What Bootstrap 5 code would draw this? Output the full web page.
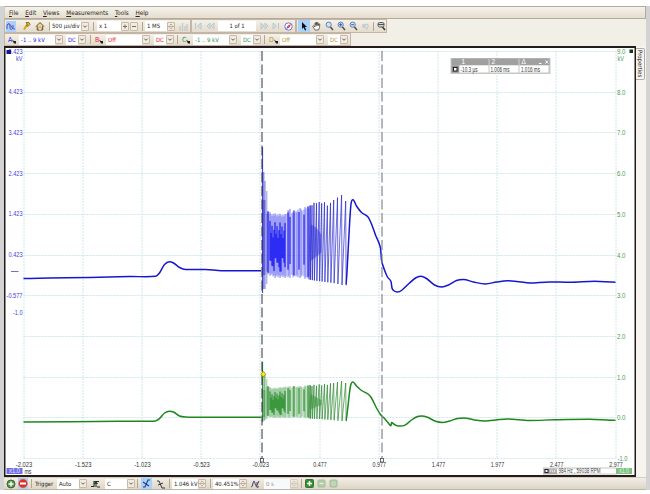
<!DOCTYPE html>
<html lang="en">
<head>
<meta charset="utf-8">
<title>Oscilloscope capture</title>
<link href="https://cdn.jsdelivr.net/npm/bootstrap@5.3.0/dist/css/bootstrap.min.css" rel="stylesheet">
<script src="https://cdn.jsdelivr.net/npm/bootstrap@5.3.0/dist/js/bootstrap.bundle.min.js"></script>
<style>
body{font:5.9px/8px "DejaVu Sans Condensed","DejaVu Sans",sans-serif;color:#262420;background:#fff;width:650px;height:494px}
.frame{height:484px;margin-top:6px;background:#d3d3d3;padding:0 4px 0 4px}
.app{background:#f2efe7;height:484px}
.menus{height:13px;background:linear-gradient(#f4f2ea,#e5decf);border:1px solid #b1aba0;border-left-color:#ccc;gap:6.8px;padding-left:4px;font-size:6.3px}
.strip{height:14px}
.strip.inputs{height:13px}
.panel{background:linear-gradient(#f4f1e8,#e3dccd);border:1px solid #c5b5a6;height:100%;padding-left:1px}
.sepr{width:1px;height:9px;background:#b8a493;flex:none}
.fld{height:10px;background:#fff;line-height:10px;padding-left:2px;flex:none;white-space:nowrap}
.drop,.spin{width:8px;height:9px;border:1px solid #c9b9a8;border-radius:1px;background:#f2ece0;flex:none;display:block}
.panel svg,.foot svg{display:block;flex:none;overflow:visible}
.on{background:#a9d2fa}
.g1{margin-left:1px}.g2{margin-left:2px}.g3{margin-left:3px}.g4{margin-left:4px}.g5{margin-left:5px}.g6{margin-left:6px}
.w12{width:12px}.w21{width:22px}.w24{width:24px}.w26{width:26px}.w30{width:31px}.w36{width:36px}.w38{width:38px}
.chA{color:#2424e4}.chB{color:#f02020}.chC{color:#2f9150}.chD{color:#b99030}
.chan{width:11px;flex:none;font-size:7px}
.p1{width:187px}.p2{width:105px}.p3{width:91px}.p4{width:347px}
.plot{width:632px;height:431px;display:block;flex:none}
.side{width:10px;background:#f7f4ef}
.tab{writing-mode:vertical-rl;height:32px;width:9px;border:1px solid #b3aea5;border-left:0;border-radius:0 2px 2px 0;line-height:8px;margin-top:2px;font-size:6px;padding-top:1px;white-space:nowrap}
.foot{height:13px;background:linear-gradient(#f1eee4,#ddd6c6);border-bottom:1px solid #bdb6a8;border-top:1px solid #d9cdbd}
.plot text{font-family:"Liberation Sans",Arial,sans-serif;font-size:6.5px}
</style>
</head>
<body class="overflow-hidden">
<svg width="0" height="0" class="position-absolute">
<defs>
<symbol id="dn" viewBox="0 0 6 7"><path d="M1.3 2.6 3 4.3 4.7 2.6" fill="none" stroke="#625c50"/></symbol>
<symbol id="sp" viewBox="0 0 6 7"><path d="M1.5 2.4 3 1l1.5 1.4M1.5 4.8 3 6.2l1.5-1.4M0 3.6h6" fill="none" stroke="#9a8a78" stroke-width=".7"/></symbol>
<symbol id="pls" viewBox="0 0 6 7"><path d="M1 3.5h4M3 1.5v4" stroke="#777066"/></symbol>
<symbol id="mns" viewBox="0 0 6 7"><path d="M1 3.5h4" stroke="#777066"/></symbol>
<symbol id="lens" viewBox="0 0 9 10"><path d="M5 5.5 8 9" stroke="#5a4c40" stroke-width="1.5"/><circle cx="3.7" cy="3.7" r="2.6" fill="#c9e4f8" stroke="#6680b4"/></symbol>
<symbol id="probe" viewBox="0 0 5 5"><path d="M0 .5 2 2l2 0v2.500H2z" fill="#222"/></symbol>
</defs>
</svg>
<div class="frame">
<div class="app d-flex flex-column">
  <nav class="menus d-flex align-items-center"><span><u>F</u>ile</span><span><u>E</u>dit</span><span><u>V</u>iews</span><span><u>M</u>easurements</span><span><u>T</u>ools</span><span><u>H</u>elp</span></nav>
  <div class="strip d-flex">
    <div class="panel p1 d-flex align-items-center">
      <svg class="on" width="10" height="11" viewBox="0 0 10 11"><path d="M1 8V5c0-3 3-3 3 0v2c0 2 3 2 3-1V4" fill="none" stroke="#3454cc"/><path d="M1 4c2-2 3-1 4 1s2 3 4 3" fill="none" stroke="#9a3a94"/></svg>
      <svg class="g6" width="9" height="10" viewBox="0 0 9 10"><path d="M2 8.500 5.500 3" stroke="#d7a113" stroke-width="2"/><path d="M4 1.500h3l1 2-2 2-1.500-1 1-1z" fill="#eab720" stroke="#4a3a18" stroke-width=".6"/></svg>
      <svg class="g4" width="10" height="10" viewBox="0 0 10 10"><path d="M1 5.500 5 1.500l4 4M2.200 5v4h5.500V5" fill="#f3d68c" stroke="#50401f" stroke-width=".9"/><path d="M4 9V6h2v3" fill="#fff" stroke="#795b2d" stroke-width=".5"/></svg>
      <i class="sepr g4"></i><div class="fld w30">500 µs/div</div><span class="drop"><svg width="6" height="7"><use href="#dn"/></svg></span>
      <i class="sepr g4"></i><div class="fld w24 g3">x 1</div><span class="drop"><svg width="6" height="7"><use href="#pls"/></svg></span><span class="drop g1"><svg width="6" height="7"><use href="#mns"/></svg></span>
      <i class="sepr g4"></i><div class="fld w21 g2">1 MS</div><span class="spin"><svg width="6" height="7"><use href="#sp"/></svg></span>
      <svg class="g4" width="9" height="9" viewBox="0 0 9 9"><path d="M1 9V4M3.500 9V1M6 9V4M8 9V2" stroke="#c4cac9" stroke-width="1.3"/></svg>
    </div>
    <div class="panel p2 d-flex align-items-center">
      <svg class="g1" width="8" height="8" viewBox="0 0 8 8"><path d="M1.500 1v6M7 1 3.500 4 7 7z" fill="#d7e1df" stroke="#b6c8cb"/></svg>
      <svg class="g4" width="9" height="8" viewBox="0 0 9 8"><path d="M4 1 1 4l3 3zM8 1 5 4l3 3z" fill="#d7e1df" stroke="#b6c8cb"/></svg>
      <div class="fld w38 g3 text-center p-0">1 of 1</div>
      <svg class="g4" width="9" height="8" viewBox="0 0 9 8"><path d="M1 1 4 4 1 7zM5 1l3 3-3 3z" fill="#d7e1df" stroke="#b6c8cb"/></svg>
      <svg class="g3" width="8" height="8" viewBox="0 0 8 8"><path d="M6.500 1v6M1 1l3.500 3L1 7z" fill="#d7e1df" stroke="#b6c8cb"/></svg>
      <svg class="g4" width="9" height="9" viewBox="0 0 9 9"><circle cx="4.500" cy="4.500" r="3.700" fill="#fff" stroke="#8a6cc4"/><path d="M7 2 5.500 5.500 3.700 3.700z" fill="#e0302a"/><path d="M2 7 5.500 5.500 3.700 3.700z" fill="#4660cc"/></svg>
    </div>
    <div class="panel p3 d-flex align-items-center">
      <svg class="on" width="12" height="12" viewBox="0 0 12 12"><path d="M4 2v7l1.600-1.500L7 10.500l1.200-.6L6.900 7H9z" fill="#111"/></svg>
      <svg class="g2" width="9" height="10" viewBox="0 0 9 10"><path d="M3 9 .7 5.300l1-.6L3 6V2h1v2.500-3h1v3l.2-2.700h1v3L6.800 3h1L7.500 6.500 6.500 9z" fill="#fff" stroke="#37332e" stroke-width=".7"/></svg>
      <svg class="g4" width="9" height="10"><use href="#lens"/></svg>
      <svg class="g3" width="9" height="10"><use href="#lens"/><path d="M2.200 3.700h3M3.700 2.200v3" stroke="#2838a8" stroke-width=".8"/></svg>
      <svg class="g3" width="9" height="10"><use href="#lens"/><path d="M2.200 3.700h3" stroke="#2838a8" stroke-width=".8"/></svg>
      <svg class="g3" width="9" height="9" viewBox="0 0 9 9"><path d="M2 2v3h3M2.500 4.500C4 1 8 2 7 5L5 8" fill="none" stroke="#bfcacc" stroke-width="1.300"/></svg>
      <i class="sepr g3"></i>
      <svg class="g3" width="9" height="10" viewBox="0 0 9 10"><path d="M5 5.500 8 9" stroke="#463c34" stroke-width="1.600"/><rect x="1" y="1.500" width="6" height="4.500" rx="1.500" fill="#c8d3d7" stroke="#615950"/><path d="M1 3.500h6" stroke="#555"/></svg>
    </div>
  </div>
  <div class="strip inputs d-flex">
    <div class="panel p4 d-flex align-items-center">
      <div class="chan g2 chA d-flex align-items-center">A<svg width="5" height="5" class="mt-1"><use href="#probe"/></svg></div><div class="fld w36 chA">-1 .. 9 kV</div><span class="drop"><svg width="6" height="7"><use href="#dn"/></svg></span><div class="fld w12 g3 chA">DC</div><span class="drop"><svg width="6" height="7"><use href="#dn"/></svg></span>
      <i class="sepr g4"></i>
      <div class="chan g4 chB d-flex align-items-center">B<svg width="5" height="5" class="mt-1"><use href="#probe"/></svg></div><div class="fld w36 chB">Off</div><span class="drop"><svg width="6" height="7"><use href="#dn"/></svg></span><div class="fld w12 g4 chB">DC</div><span class="drop"><svg width="6" height="7"><use href="#dn"/></svg></span>
      <i class="sepr g3"></i>
      <div class="chan g4 chC d-flex align-items-center">C<svg width="5" height="5" class="mt-1"><use href="#probe"/></svg></div><div class="fld w36 chC">-1 .. 9 kV</div><span class="drop"><svg width="6" height="7"><use href="#dn"/></svg></span><div class="fld w12 g4 chC">DC</div><span class="drop"><svg width="6" height="7"><use href="#dn"/></svg></span>
      <i class="sepr g3"></i>
      <div class="chan g4 chD d-flex align-items-center">D<svg width="5" height="5" class="mt-1"><use href="#probe"/></svg></div><div class="fld w36 chD">Off</div><span class="drop"><svg width="6" height="7"><use href="#dn"/></svg></span><div class="fld w12 g4 chD">DC</div><span class="drop"><svg width="6" height="7"><use href="#dn"/></svg></span>
    </div>
  </div>
  <div class="d-flex">
    <svg class="plot" id="plot" viewBox="4.500 46 632 431"></svg>
    <div class="side"><div class="tab">Properties</div></div>
  </div>
  <div class="foot d-flex align-items-center">
    <svg class="g2" width="10" height="10" viewBox="0 0 10 10"><circle cx="5" cy="5" r="4" fill="#469b42" stroke="#46633c"/><path d="M2.500 5h5M5 2.500v5" stroke="#fff" stroke-width="1.500"/></svg>
    <svg class="g2 on" width="10" height="11" viewBox="0 0 10 11"><circle cx="5" cy="5.500" r="4.300" fill="#df3028" stroke="#c95a50" stroke-width=".5"/><path d="M2 5.500h6" stroke="#fff" stroke-width="2"/></svg>
    <i class="sepr g3"></i><span class="g3 w21 flex-shrink-0">Trigger</span>
    <div class="fld w21 ">Auto</div><span class="drop"><svg width="6" height="7"><use href="#dn"/></svg></span>
    <svg class="g4" width="9" height="9" viewBox="0 0 9 9"><path d="M0 7.500h3v-5h5M5 3v5M3.500 5 5 3l1.500 2M6 8h3" fill="none" stroke="#26332d" stroke-width="1.100"/></svg>
    <div class="fld w21 g5">C</div><span class="drop"><svg width="6" height="7"><use href="#dn"/></svg></span>
    <i class="sepr g2"></i>
    <svg class="g3 on" width="11" height="11" viewBox="0 0 11 11"><path d="M2 9h2l3-7h2M2 4l6 4" fill="none" stroke="#293e7e" stroke-width="1.100"/></svg>
    <svg class="g4" width="10" height="10" viewBox="0 0 10 10"><path d="M1 2h2l3 7h3M2 6l5-2" fill="none" stroke="#34363c"/></svg>
    <i class="sepr g3"></i><div class="fld w26 g2">1.046 kV</div><span class="spin"><svg width="6" height="7"><use href="#sp"/></svg></span>
    <i class="sepr g4"></i><div class="fld w26 g2">40.451%</div><span class="spin"><svg width="6" height="7"><use href="#sp"/></svg></span>
    <svg class="g4" width="9" height="10" viewBox="0 0 9 10"><path d="M0 8c2 0 2-6 3-6s1 6 3 4l2-4" fill="none" stroke="#3d367b"/><path d="M6 3v5M4.500 6.500 6 8.500l2-1" fill="none" stroke="#5e4a54"/></svg>
    <div class="fld w26 g4 bg-light text-black-50">0 s</div><span class="spin opacity-50"><svg width="6" height="7"><use href="#sp"/></svg></span>
    <i class="sepr g3"></i>
    <svg class="g3" width="9" height="9" viewBox="0 0 9 9"><rect x=".5" y=".5" width="8" height="8" rx="1" fill="#2c932f" stroke="#426f38"/><path d="M2 4.500h5M4.500 2v5" stroke="#fff" stroke-width="1.500"/></svg>
    <svg class="g3" width="9" height="9" viewBox="0 0 9 9"><rect x="1" y="1" width="7" height="7" rx="1" fill="#b3ceaa" stroke="#a4bd9a"/><path d="M2.500 4.500h4" stroke="#eef3ea"/></svg>
    <svg class="g3" width="9" height="9" viewBox="0 0 9 9"><rect x="1" y="1" width="7" height="7" rx="1" fill="#b3ceaa" stroke="#a4bd9a"/><path d="M3 3h3v3H3z" fill="none" stroke="#dce9d6" stroke-width=".6"/></svg>
  </div>
</div>
</div>
<script>
const BLUE = '#1616d0', GREEN = '#1f861f';
let out = '<rect x="4.500" y="46" width="632" height="431" fill="#241c1c"/><rect x="6" y="48" width="629" height="427" fill="#fff"/>';
const line = (x1, y1, x2, y2, c, d, w = 1) => out += `<line x1="${x1}" y1="${y1}" x2="${x2}" y2="${y2}" stroke="${c}" stroke-width="${w}" stroke-dasharray="${d}"/>`;
const text = (s, x, y, c, a = 'start', w = 0) => out += `<text x="${x}" y="${y}" fill="${c}" text-anchor="${a}"${w ? ` textLength="${w}" lengthAdjust="spacingAndGlyphs"` : ''}>${s}</text>`;

// grid and axes
for (let i = 0; i < 11; i++) {
  const gx = 24.5 + i * 59.2, gy = Math.round(51 + i * 40.72) + .5;
  line(Math.round(gx) - .5, 51, Math.round(gx) - .5, 458.5, '#d0e6ea', '2 1');
  line(24, gy, 616.5, gy, '#d0e6ea', '2 1');
  text(['-2.023','-1.523','-1.023','-0.523','-0.023','0.477','0.977','1.477','1.977','2.477','2.977'][i], gx, 466.7, '#333', 'middle', i < 5 ? 16.5 : 13.5);
  text((9 - i).toFixed(1), i < 10 ? 617.5 : 618, gy + 2.2, '#4c9b4c', 'start', i < 10 ? 8.5 : 10);
}
['5.423','4.423','3.423','2.423','1.423','0.423','-0.577'].forEach((s, i) => text(s, 23, 53.6 + i * 40.7, '#3c3ce0', 'end', i < 6 ? 14 : 16));
text('kV', 23, 61, '#3c3ce0', 'end', 6.5); text('kV', 618, 61, '#4c9b4c', 'start', 6.5);
text('-1.0', 23, 315, '#3c3ce0', 'end', 9.5);
out += '<rect x="7" y="50" width="4.500" height="4" fill="#15158c"/><rect x="630" y="49.500" width="3.500" height="3.500" fill="#103c10"/>';
line(11.5, 271.5, 19, 271.5, '#7070bb', '', 1);

// smooth curve through a list of points
function curve(p, c) {
  let d = `M${p[0]}`;
  for (let i = 0; i < p.length - 1; i++) {
    const a = p[i - 1] || p[i], b = p[i], e = p[i + 1], f = p[i + 2] || e, w = e[0] - b[0];
    const slope = (u, v, m) => ((m[1] - u[1]) * (v[1] - m[1]) <= 0) ? 0 : (v[1] - u[1]) / (v[0] - u[0] || 1);
    d += `C${b[0] + w / 3},${b[1] + slope(a, e, b) * w / 3} ${e[0] - w / 3},${e[1] - slope(b, f, e) * w / 3} ${e}`;
  }
  out += `<path d="${d}" fill="none" stroke="${c}" stroke-width="1.500"/>`;
}
const at = (k, x) => { for (let i = 1; i < k.length; i++) if (x <= k[i][0]) { const [a, b] = [k[i - 1], k[i]]; return a[1] + (b[1] - a[1]) * (x - a[0]) / (b[0] - a[0]); } return k[k.length - 1][1]; };

// oscillating section between a top and a bottom envelope
function burst(top, bot, spikes, c, core, pale) {
  const H = at(bot, 285) - at(top, 285);
  // pale mass of the closely packed cycles
  let d = '';
  for (let x = 267; x < 311; x++) {
    const n = (x * 7) % 5;
    if (x > 286 && x % 4 === 3) continue;
    d += `M${x + .5},${at(top, x) + n * H * .012}V${at(bot, x) - n * H * .012}`;
  }
  for (let x = 311; x < 322; x++) d += `M${x + .5},${at(top, x) + H * (.3 + (x - 311) * .02)}V${at(bot, x) - H * (.3 + (x - 311) * .015)}`;
  out += `<path d="${d}" stroke="${pale}" stroke-width="1"/>`;
  // dense centre
  d = '';
  for (let x = 270; x < 286; x++) {
    const n = (x * 3) % 5;
    d += `M${x + .5},${at(top, x) + H * (.14 + .06 * n)}V${at(bot, x) - H * (.1 + .07 * ((n + x) % 4))}`;
  }
  [268.5, 288.5, 290.5, 294.5, 299.5, 304.5, 308.5].forEach((x, i) => d += `M${x},${at(top, x) + H * .06 * (i % 3)}V${at(bot, x) - H * (.04 + .09 * (i % 3))}`);
  out += `<path d="${d}" stroke="${core}" stroke-width="1"/>`;
  // separately visible cycles: a sloped rise and a steep fall
  const xs = [311, 312.8, 314.8, 317.3, 320, 322.5, 325.3, 328.2, 331.3, 334.5, 338.3, 342.4, 346.5];
  d = `M309.500,${at(bot, 309)}`;
  xs.forEach((x, i) => {
    const t = at(top, x) + (i % 2 && x < 333 ? 1.2 : 0);
    d += `L${x - .3},${t}L${x + .1},${at(bot, x)}`;
  });
  out += `<path d="${d}" fill="none" stroke="${c}" stroke-width=".8" opacity=".85"/>`;
  spikes.forEach(([x, a, b, w, o]) => out += `<line x1="${x}" x2="${x}" y1="${a}" y2="${b}" stroke="${c}" stroke-width="${w}" opacity="${o}"/>`);
}
curve([[24,278.5],[50,278],[90,277.5],[130,276.5],[156,276.3],[160,273],[165,264.5],[170,261.7],[174,263],[180,267.5],[186,269.5],[206,269.5],[222,270.7],[261.5,270.7]], BLUE);
burst([[268,211],[272,213],[285,214],[289,208],[293,211],[300,208],[310,206],[316,202],[325,202],[329,205],[334.5,200],[342.4,195],[346.5,201]],
      [[268,275],[275,278],[300,278],[318,281],[334,283],[342.400,285],[346.500,285]],
      [[263,147,293,1.2,.85],[264.3,172,289,1,.7],[265.5,181,289,1,.6],[267.3,191,284,.8,.6],[264.500,200,275,3,.45]], '#2424cc', '#0606f2', '#7f7ff4');
curve([[346.5,285],[348,262],[350,225],[351.5,204],[353.5,199.8],[357,206],[362,212.5],[368.5,217],[372,224],[376,235],[381,248],[382,260],[385,270],[388,277],[391.5,281.5],[392.5,288],[394,290.5],[398,292],[402,290.5],[410,283],[416,278],[421,276.3],[427,278.5],[435,285],[442,287],[449,285],[457,280.5],[464,279.5],[474,282],[486,284],[497,282],[508,280.7],[520,281.7],[530,283],[550,281.9],[570,282.3],[595,281.3],[616,282.2]], BLUE);

curve([[24,422],[70,421.8],[120,421.200],[156,421],[160,418.5],[165,413],[170,411.2],[174,412],[180,416],[186,417],[210,417.3],[261.5,417.3]], GREEN);
burst([[268,386],[272,388],[290,386],[300,386],[312,385],[325,384],[334.5,383],[342.4,381],[346.5,383]],
      [[268,417],[272,418],[300,418],[320,419],[342.400,421],[346.500,421]],
      [[263,362,422,1.2,.9],[264.5,372,421,1,.7],[265.5,375,420,1,.6],[267.3,379,419,.8,.6],[264.500,390,417,3,.4]], '#25852a', '#1a861e', '#84bd86');
curve([[346.5,421],[348,410],[351,386],[353.5,382],[357,386],[362,390.5],[368.5,394],[372,398],[377,408],[381,414.5],[385,418.5],[388,422],[391.500,425.8],[392,422.500],[395,424.500],[399,426],[405,425.4],[412,420],[418,416.5],[422,416],[428,417.3],[436,421.3],[443,422.5],[450,421],[458,418.5],[465,418],[475,420],[486,421],[498,419.7],[508,419],[530,420.5],[555,419.8],[590,419.3],[616,420.3]], GREEN);

// time cursors with handles
line(262.5, 51, 262.5, 460, '#32323a', '10 3.500', 1);
line(382.5, 51, 382.5, 460, '#85858d', '10 3.500', 1.2);
[262.5, 382.5].forEach(x => out += `<rect x="${x - 1.5}" y="458.500" width="3" height="3.500" fill="#fff" stroke="#444" stroke-width=".8"/>`);
out += '<path d="M263.800 371.500l2.500 2.700-2.500 2.700-2.500-2.700z" fill="#fff000" stroke="#867a20" stroke-width=".7"/>';

// ruler legend
out += '<rect x="451" y="58" width="100" height="16" fill="#c7c7c7"/><rect x="452" y="58.500" width="98" height="6.500" fill="#a0a0a0"/><rect x="452" y="65.500" width="7.500" height="7" fill="#8c8c8c"/><rect x="454" y="67.500" width="3.500" height="3.500" fill="#fff" stroke="#222"/>';
[[460, 29], [490, 29], [520, 29]].forEach(([x, w]) => out += `<rect x="${x}" y="65.500" width="${w}" height="7" fill="#fff"/>`);
line(489.5, 59, 489.5, 65, '#e6e6e6', '', .7); line(519.5, 59, 519.5, 65, '#e6e6e6', '', .7);
text('1', 462, 64, '#fff'); text('2', 492, 64, '#fff'); text('Δ', 522, 64, '#fff');
text('-10.3 µs', 461, 71.5, '#333', 'start', 17); text('1.006 ms', 491, 71.5, '#333', 'start', 19); text('1.016 ms', 521.5, 71.5, '#333', 'start', 19);
out += '<path d="M539.500 63.500h2.500M546 60.500l2.500 3M548.500 60.500l-2.500 3" stroke="#fff" fill="none"/>';

// axis scale tags and frequency legend
out += '<rect x="7" y="468" width="16" height="6" fill="#6e6ee4"/>';
text('x1.0', 15, 473, '#e4e4ff', 'middle', 11); text('ms', 25, 473.5, '#333', 'start', 7);
out += '<rect x="544" y="468" width="73" height="6" fill="#fff" stroke="#b0b0b0" stroke-width=".700"/><rect x="544.500" y="468.500" width="13" height="5.500" fill="#aaa"/><rect x="545.500" y="469.500" width="3" height="3" fill="#fff" stroke="#222"/><path d="M551 472v-2h2v2h2v-2h2" stroke="#eee" stroke-width=".7" fill="none"/>';
text('984 Hz , 59038 RPM', 559, 473.2, '#444', 'start', 42);
out += '<rect x="616.500" y="468" width="16" height="6" fill="#80c183"/>';
text('x1.0', 624.5, 473, '#dcf3dc', 'middle', 10);
document.getElementById('plot').innerHTML = out;
</script>
</body>
</html>
